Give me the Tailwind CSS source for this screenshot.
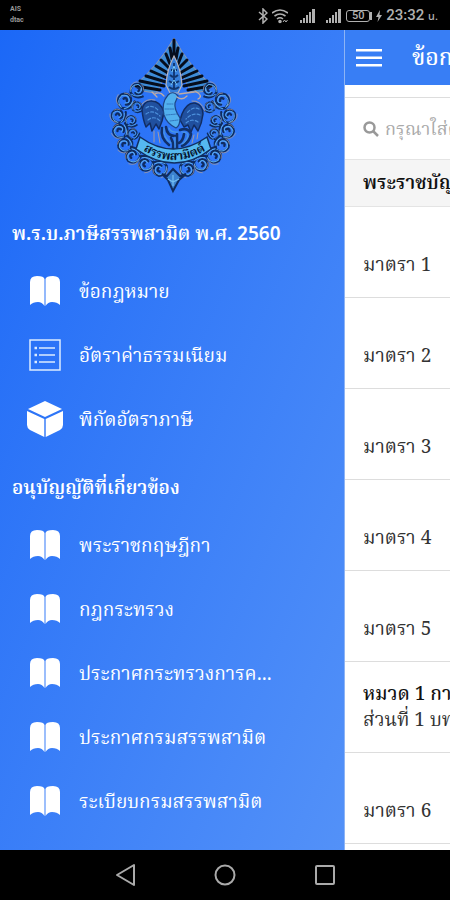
<!DOCTYPE html>
<html lang="th">
<head>
<meta charset="utf-8">
<meta name="viewport" content="width=device-width, initial-scale=1">
<title>พ.ร.บ.ภาษีสรรพสามิต พ.ศ. 2560</title>
<script src="https://cdn.jsdelivr.net/npm/@tailwindcss/browser@4"></script>
</head>
<body class="flex h-screen flex-col overflow-hidden bg-black font-['Noto_Serif_Thai','Noto_Sans_Thai','Noto_Sans',sans-serif]">

<!-- Shared symbols -->
<svg class="hidden" aria-hidden="true">
  <symbol id="book" viewBox="0 0 32 32">
    <path fill="currentColor" d="M1 7Q1 1 8 1Q15 1 15.500 4V31Q13 27 9 27Q4 27 1 30Z"/>
    <path fill="currentColor" d="M31 7Q31 1 24 1Q17 1 16.500 4V31Q19 27 23 27Q28 27 31 30Z"/>
  </symbol>
  <symbol id="signal" viewBox="0 0 16 16">
    <path fill="currentColor" d="M0 12h2v3H0zM3 10h2v5H3zM6 7h2v8H6zM9 4h2v11H9zM12 1h3v14h-3z"/>
  </symbol>
</svg>

<!-- Status bar -->
<div class="flex h-[30px] shrink-0 items-center justify-between pr-3 pl-2.5 font-['Roboto','Noto_Sans_Thai','Noto_Serif_Thai',sans-serif] text-[#b0b0b0]">
  <div class="text-[7px] leading-[11px] font-bold text-[#999]"><div>AIS</div><div>dtac</div></div>
  <div class="flex items-center pt-0.5">
    <svg class="mr-1 h-4 w-2.5" viewBox="0 0 10 16" fill="none" stroke="currentColor" stroke-width="1.500"><path d="M1 4l8 7-4 4V1l4 4-8 7"/></svg>
    <svg class="mr-3 h-4 w-4" viewBox="0 0 16 16" fill="none" stroke="currentColor" stroke-width="1.600"><path d="M0 5q8-6 16 0M2.500 8q5.500-4 11 0M5 11q3-2.500 6 0"/><circle cx="8" cy="13.500" r="1" fill="currentColor"/><path d="M11 14l1.500-2 1.500 2 1.500-2" stroke-width="1"/></svg>
    <svg class="mr-2.5 h-4 w-4"><use href="#signal"/></svg>
    <svg class="mr-1 h-4 w-4"><use href="#signal"/></svg>
    <div class="flex h-3 w-6 items-center justify-center rounded-[3px] border border-current text-[11px] leading-3 font-medium">50</div>
    <div class="mr-1 h-2 w-0.5 bg-current"></div>
    <svg class="mr-1 h-3 w-1.5" viewBox="0 0 6 12"><path fill="currentColor" d="M4 0L0 7h2.500L1.500 12 6 5H3.500z"/></svg>
    <div class="text-[15px] leading-4 font-medium">23:32 <span class="text-[11px]">น.</span></div>
  </div>
</div>

<div class="flex min-h-0 flex-1 bg-white">
  <!-- Drawer -->
  <nav aria-label="เมนู" class="w-[344px] max-w-[80%] shrink-0 overflow-hidden bg-linear-to-br from-[#1b68f7] to-[#5391f8] font-['Noto_Sans','Noto_Serif_Thai',sans-serif] text-white">
    <svg class="mx-auto block h-[167px] w-[150px]" viewBox="-3 0 150 167" role="img" aria-label="ตราสรรพสามิต">
      <defs>
        <g id="curl" fill="none" stroke-linecap="round">
          <path d="M-7 5Q-10-6 0-8Q9-7 7 1Q4 7-1 4M0-3Q4-3 2 1M-7 5Q0 12 9 6" stroke="#0f2c60" stroke-width="2.800"/>
          <path d="M-7 4Q-9-5 0-7Q7-5 5 1Q3 5-1 2M-5 7Q1 9 7 5" stroke="#5aaaf0" stroke-width="1.200"/>
          <path d="M-8 2Q-11-6-3-10M4-8Q8-6 8-2" stroke="#a59ba0" stroke-width=".8"/>
        </g>
      </defs>
      <!-- Rays -->
      <path d="M74 8Q90 38 113 56Q104 64 91 62L74 28L57 62Q45 64 34 56Q58 36 74 8Z" fill="#3d8cd8" stroke="#a59ba0" stroke-width=".8"/>
      <g stroke="#050d1c" stroke-width="3" stroke-linecap="round">
        <path d="M74 10V28M70 18L72 29M78 18L76 29M66 24L70 34M82 24L78 34M61 30L69 38M87 30L79 38M56 36L68 43M92 36L80 43M51 41L67 48M97 41L81 48M46 46L66 52M102 46L82 52M40 51L64 56M107 51L84 56M36 56L60 60M111 56L88 60"/>
      </g>
      <!-- Crown -->
      <path d="M74 26Q81 39 82 55L78 63H70L66 55Q67 39 74 26Z" fill="#367fdc" stroke="#b8b5bd" stroke-width="1.200"/>
      <path d="M74 33V60M70 45Q74 49 78 45M69 51Q74 55 79 51M69 57Q74 61 79 57M71 40H77" fill="none" stroke="#10356f" stroke-width="1.800"/>
      <path d="M72 42L74 36L76 42M71 55L74 50L77 55" fill="none" stroke="#78c7f5" stroke-width="1"/>
      <!-- Scrolled frame -->
      <use href="#curl" transform="translate(37 60) rotate(15) scale(.8)"/>
      <use href="#curl" transform="translate(25 71) rotate(-30) scale(.9)"/>
      <use href="#curl" transform="translate(37 77) scale(.6)"/>
      <use href="#curl" transform="translate(18 86) rotate(-60) scale(.8)"/>
      <use href="#curl" transform="translate(31 91) scale(.65)"/>
      <use href="#curl" transform="translate(20 101) rotate(-90) scale(.85)"/>
      <use href="#curl" transform="translate(33 104) rotate(-40) scale(.6)"/>
      <use href="#curl" transform="translate(25 115) rotate(-110) scale(.85)"/>
      <use href="#curl" transform="translate(33 126) rotate(-135) scale(.85)"/>
      <use href="#curl" transform="translate(46 134) rotate(-155) scale(.85)"/>
      <use href="#curl" transform="translate(60 139) rotate(-170) scale(.85)"/>
      <use href="#curl" transform="translate(110 60) scale(-.8 .8) rotate(15)"/>
      <use href="#curl" transform="translate(122 71) scale(-.9 .9) rotate(-30)"/>
      <use href="#curl" transform="translate(110 77) scale(-.6 .6)"/>
      <use href="#curl" transform="translate(129 86) scale(-.8 .8) rotate(-60)"/>
      <use href="#curl" transform="translate(116 91) scale(-.65 .65)"/>
      <use href="#curl" transform="translate(127 101) scale(-.85 .85) rotate(-90)"/>
      <use href="#curl" transform="translate(114 104) scale(-.6 .6) rotate(-40)"/>
      <use href="#curl" transform="translate(122 115) scale(-.85 .85) rotate(-110)"/>
      <use href="#curl" transform="translate(114 126) scale(-.85 .85) rotate(-135)"/>
      <use href="#curl" transform="translate(101 134) scale(-.85 .85) rotate(-155)"/>
      <use href="#curl" transform="translate(87 139) scale(-.85 .85) rotate(-170)"/>
      <path d="M62 144L68 150L73 161L79 150L86 144L80 146L73 139L67 146Z" fill="#3b82d0" stroke="#0f2c60" stroke-width="2"/>
      <path d="M73 145V156M68 149L73 152L79 149" fill="none" stroke="#72bdf0" stroke-width="1.200"/>
      <!-- Bird -->
      <g stroke-linecap="round" stroke-linejoin="round">
        <path d="M64 82Q60 70 50 71Q43 72 42 80Q43 90 46 97L50 93L52 101L56 94L59 99L62 91ZM82 84Q87 72 95 73Q103 75 103 84Q102 93 98 101L94 95L91 102L88 95L84 97L80 90Z" fill="#20509f" stroke="#112c62" stroke-width="1.500"/>
        <path d="M46 78Q52 74 58 80M46 84Q53 79 60 86M48 90Q54 85 60 91M99 79Q93 76 87 83M100 85Q93 82 86 89M98 92Q92 88 86 93" fill="none" stroke="#4c90dc" stroke-width="1.200" stroke-dasharray="3 2"/>
        <path d="M42 74Q47 68 55 70M92 71Q101 70 105 81" fill="none" stroke="#a59ba0" stroke-width="1"/>
        <path d="M68 65Q73 60 78 66L75 73Q74 79 80 88Q80 96 76 98Q67 94 64 85Q61 73 68 65Z" fill="#52b0ee" stroke="#1d4587" stroke-width="1.200"/>
        <path d="M67 74H73M65 79L74 79M66 85L77 84M70 91L78 90" stroke="#2b68b2" stroke-width=".8" stroke-dasharray="1.500 1"/>
        <path d="M77 67Q82 71 87 66M79 64L94 62M57 67L52 62M95 61Q104 66 98 69M64 66Q60 61 55 64" fill="none" stroke="#c0aba4" stroke-width="1.300"/>
        <path d="M62 98Q60 108 69 115M66 97Q67 106 75 106M80 100Q88 97 91 104Q90 112 82 116M77 104L77 118M84 104Q83 111 79 113M71 108Q74 114 73 118" fill="none" stroke="#10306a" stroke-width="2.600"/>
        <path d="M64 98Q63 108 71 113M69 98Q71 103 78 102M82 102Q88 102 88 106Q86 112 82 114M75 107L75 117" fill="none" stroke="#4c98df" stroke-width="1.100"/>
        <path d="M54 101V112M58 102L60 113M94 105L92 113M98 103L97 109" fill="none" stroke="#a59ba0" stroke-width="1"/>
      </g>
      <!-- Ribbon -->
      <path d="M40 107Q73 131 107 107L111 119Q75 147 36 119Z" fill="#55b9f0" stroke="#102e60" stroke-width="1.500"/>
      <path id="ribbon-text" d="M38 117Q74 143 111 117" fill="none"/>
      <text class="text-[12px] font-bold" fill="#06142e" text-anchor="middle"><textPath href="#ribbon-text" startOffset="50%">สรรพสามิตต์</textPath></text>
    </svg>

    <h2 class="flex h-[62px] items-center pt-2.5 pl-3 text-[19px] leading-7 font-semibold whitespace-nowrap">พ.ร.บ.ภาษีสรรพสามิต พ.ศ. 2560</h2>
    <ul class="text-[19px] leading-8">
      <li><a href="#" class="flex h-16 items-center gap-4 pr-[72px] pl-[27px]"><svg class="h-8 w-9 shrink-0"><use href="#book"/></svg><span class="truncate">ข้อกฎหมาย</span></a></li>
      <li><a href="#" class="flex h-16 items-center gap-4 pr-[72px] pl-[27px]"><svg class="h-8 w-9 shrink-0" viewBox="0 0 32 32" fill="none" stroke="#dcebff" stroke-width="1.500"><path d="M1 1h30v30H1zM10 9h16M10 16h16M10 23h16"/><path d="M5.500 9h2.500M5.500 16h2.500M5.500 23h2.500" stroke-width="2.500"/></svg><span class="truncate">อัตราค่าธรรมเนียม</span></a></li>
      <li><a href="#" class="flex h-16 items-center gap-4 pr-[72px] pl-[27px]"><svg class="h-9 w-9 shrink-0" viewBox="0 0 36 36" fill="currentColor"><path d="M18 0L35 8L18 16L1 8ZM0 10L17.300 18V36L3 29Q0 27 0 24ZM36 10L18.700 18V36L33 29Q36 27 36 24Z"/></svg><span class="truncate">พิกัดอัตราภาษี</span></a></li>
    </ul>

    <h2 class="flex h-[62px] items-center pt-2.5 pl-3 text-[19px] leading-7 font-semibold whitespace-nowrap">อนุบัญญัติที่เกี่ยวข้อง</h2>
    <ul class="text-[19px] leading-8">
      <li><a href="#" class="flex h-16 items-center gap-4 pr-[72px] pl-[27px]"><svg class="h-8 w-9 shrink-0"><use href="#book"/></svg><span class="truncate">พระราชกฤษฎีกา</span></a></li>
      <li><a href="#" class="flex h-16 items-center gap-4 pr-[72px] pl-[27px]"><svg class="h-8 w-9 shrink-0"><use href="#book"/></svg><span class="truncate">กฎกระทรวง</span></a></li>
      <li><a href="#" class="flex h-16 items-center gap-4 pr-[72px] pl-[27px]"><svg class="h-8 w-9 shrink-0"><use href="#book"/></svg><span class="truncate">ประกาศกระทรวงการคลัง</span></a></li>
      <li><a href="#" class="flex h-16 items-center gap-4 pr-[72px] pl-[27px]"><svg class="h-8 w-9 shrink-0"><use href="#book"/></svg><span class="truncate">ประกาศกรมสรรพสามิต</span></a></li>
      <li><a href="#" class="flex h-16 items-center gap-4 pr-[72px] pl-[27px]"><svg class="h-8 w-9 shrink-0"><use href="#book"/></svg><span class="truncate">ระเบียบกรมสรรพสามิต</span></a></li>
      <li><a href="#" class="flex h-16 items-center gap-4 pr-[72px] pl-[27px]"><svg class="h-8 w-9 shrink-0"><use href="#book"/></svg><span class="truncate">คำสั่ง</span></a></li>
    </ul>
  </nav>

  <!-- Page behind the drawer -->
  <main class="min-w-0 flex-1 overflow-hidden border-l border-[#8db4f5] whitespace-nowrap text-[#333]">
    <header class="flex h-[55px] items-center gap-[30px] bg-[#387ef5] pl-[11px] text-white">
      <button type="button" aria-label="เปิดเมนู" class="shrink-0"><svg class="h-5 w-[26px]" viewBox="0 0 26 20" fill="currentColor"><path d="M0 1h26v2.500H0zM0 8.500h26V11H0zM0 16h26v2.500H0z"/></svg></button>
      <h1 class="pt-0.5 text-[23px] leading-7 font-medium">ข้อกฎหมาย</h1>
    </header>
    <label class="mt-3 flex h-[62px] items-center gap-1.5 border-t border-[#ddd] pl-[18px]">
      <svg class="h-4 w-4 shrink-0" viewBox="0 0 16 16" fill="none" stroke="#999" stroke-width="2.500"><circle cx="6.500" cy="6.500" r="5"/><path d="M10 10l5 5"/></svg>
      <input type="search" aria-label="ค้นหา" placeholder="กรุณาใส่คำค้นหา" class="h-10 w-48 shrink-0 pt-1 text-[18px] outline-none placeholder:text-[#aaa]">
    </label>
    <h2 class="flex h-12 items-center border-y border-[#e4e4e4] bg-[#f5f5f5] pt-0.5 pl-[18px] text-[19px] leading-7 font-semibold text-[#111]">พระราชบัญญัติ</h2>
    <ul class="text-[19px] leading-[26px]">
      <li class="flex h-[91px] flex-col justify-end border-b border-[#ddd] pb-[18px] pl-[18px]"><p>มาตรา 1</p></li>
      <li class="flex h-[91px] flex-col justify-end border-b border-[#ddd] pb-[18px] pl-[18px]"><p>มาตรา 2</p></li>
      <li class="flex h-[91px] flex-col justify-end border-b border-[#ddd] pb-[18px] pl-[18px]"><p>มาตรา 3</p></li>
      <li class="flex h-[91px] flex-col justify-end border-b border-[#ddd] pb-[18px] pl-[18px]"><p>มาตรา 4</p></li>
      <li class="flex h-[91px] flex-col justify-end border-b border-[#ddd] pb-[18px] pl-[18px]"><p>มาตรา 5</p></li>
      <li class="flex h-[91px] flex-col justify-end border-b border-[#ddd] pb-[18px] pl-[18px]"><h3 class="font-medium text-[#111]">หมวด 1 การ</h3><p>ส่วนที่ 1 บททั่วไป</p></li>
      <li class="flex h-[91px] flex-col justify-end border-b border-[#ddd] pb-[18px] pl-[18px]"><p>มาตรา 6</p></li>
      <li class="flex h-[91px] flex-col justify-end border-b border-[#ddd] pb-[18px] pl-[18px]"><p>มาตรา 7</p></li>
    </ul>
  </main>
</div>

<!-- System navigation -->
<div class="flex h-[50px] shrink-0 items-center justify-center gap-[76px] text-[#aaa]">
  <button type="button" aria-label="ย้อนกลับ"><svg class="h-6 w-6" viewBox="0 0 24 24" fill="none" stroke="currentColor" stroke-width="2" stroke-linejoin="round"><path d="M21 2v20L4 12z"/></svg></button>
  <button type="button" aria-label="หน้าหลัก"><svg class="h-6 w-6" viewBox="0 0 24 24" fill="none" stroke="currentColor" stroke-width="2"><circle cx="12" cy="12" r="9.500"/></svg></button>
  <button type="button" aria-label="แอปล่าสุด"><svg class="h-6 w-6" viewBox="0 0 24 24" fill="none" stroke="currentColor" stroke-width="2"><rect x="3" y="3" width="18" height="18" rx="1"/></svg></button>
</div>
</body>
</html>
